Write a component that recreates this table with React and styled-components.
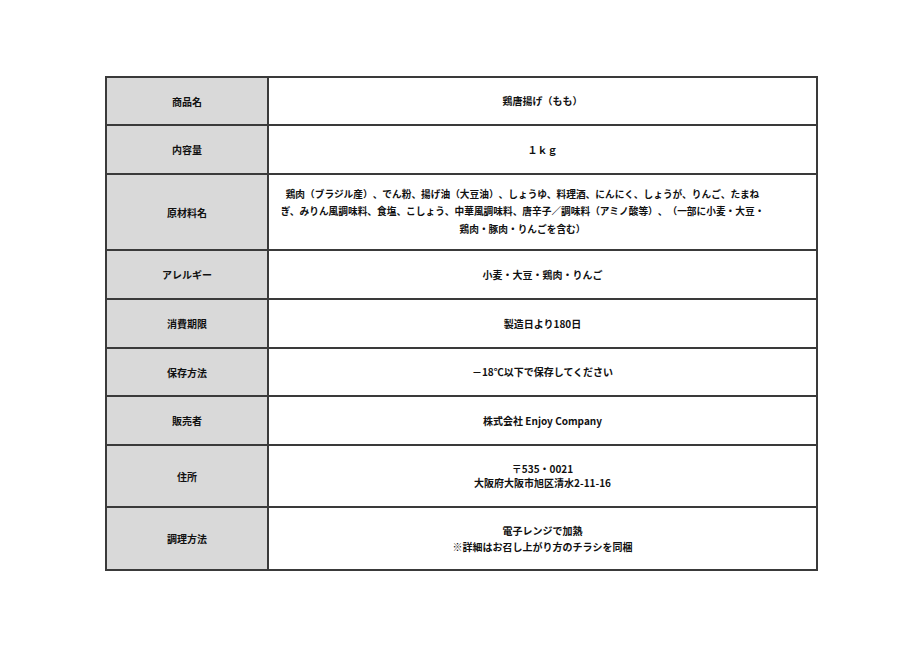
import styled, { createGlobalStyle } from "styled-components";

const rows = [
  { label: "商品名", value: ["鶏唐揚げ（もも）"], height: 48 },
  { label: "内容量", value: ["１ｋｇ"], height: 49 },
  {
    label: "原材料名",
    value: [
      "鶏肉（ブラジル産）、でん粉、揚げ油（大豆油）、しょうゆ、料理酒、にんにく、しょうが、りんご、たまねぎ、みりん風調味料、食塩、こしょう、中華風調味料、唐辛子／調味料（アミノ酸等）、（一部に小麦・大豆・鶏肉・豚肉・りんごを含む）",
    ],
    height: 76,
    wide: true,
  },
  { label: "アレルギー", value: ["小麦・大豆・鶏肉・りんご"], height: 49 },
  { label: "消費期限", value: ["製造日より180日"], height: 49 },
  { label: "保存方法", value: ["－18℃以下で保存してください"], height: 48 },
  { label: "販売者", value: ["株式会社 Enjoy Company"], height: 49 },
  {
    label: "住所",
    value: ["〒535・0021", "大阪府大阪市旭区清水2-11-16"],
    height: 62,
    lineHeight: 14,
  },
  {
    label: "調理方法",
    value: ["電子レンジで加熱", "※詳細はお召し上がり方のチラシを同梱"],
    height: 63,
    lineHeight: 16,
  },
];

const GlobalStyle = createGlobalStyle`
  body {
    margin: 0;
    background: #ffffff;
    font-family: "Noto Sans CJK JP", "Noto Sans", sans-serif;
    color: #111;
  }
`;

const Page = styled.div`
  width: 924px;
  height: 660px;
  padding-top: 76px;
  padding-left: 105px;
  box-sizing: border-box;
`;

const Sheet = styled.table`
  width: 713px;
  border-collapse: collapse;
  table-layout: fixed;
  border: 2px solid #555;
`;

const Row = styled.tr`
  height: ${(p) => p.$height}px;
`;

const Label = styled.th`
  width: 160px;
  background: #d9d9d9;
  border: 2px solid #3a3a3a;
  font-size: 10px;
  font-weight: 700;
  text-align: center;
  vertical-align: middle;
  padding: 0;
`;

const Value = styled.td`
  border: 2px solid #3a3a3a;
  background: #fff;
  font-size: ${(p) => (p.$wide ? "9.7px" : "10px")};
  font-weight: 700;
  line-height: ${(p) => p.$lineHeight}px;
  text-align: center;
  vertical-align: middle;
  padding: ${(p) => (p.$wide ? "0 50px 0 10px" : "0 20px")};
  text-spacing-trim: space-all;
`;

const Line = styled.div`
  white-space: normal;
`;

export default function App() {
  return (
    <>
      <GlobalStyle />
      <Page>
        <Sheet>
          <tbody>
            {rows.map((row) => (
              <Row key={row.label} $height={row.height}>
                <Label>{row.label}</Label>
                <Value $wide={row.wide} $lineHeight={row.wide ? 17.5 : row.lineHeight || 16}>
                  {row.value.map((line) => (
                    <Line key={line}>{line}</Line>
                  ))}
                </Value>
              </Row>
            ))}
          </tbody>
        </Sheet>
      </Page>
    </>
  );
}
